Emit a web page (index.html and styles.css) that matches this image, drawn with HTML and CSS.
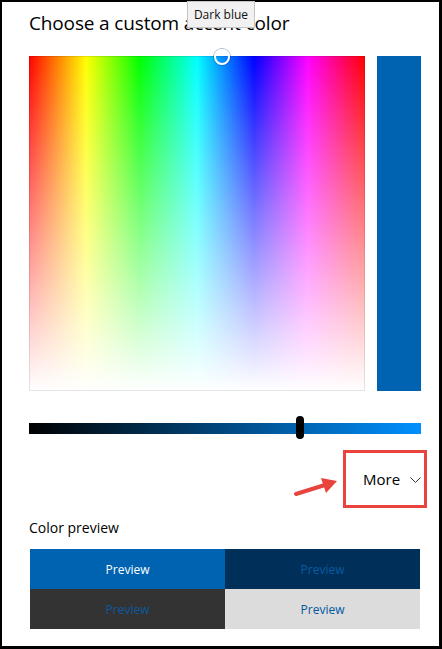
FILE: index.html
```html
<!DOCTYPE html>
<html lang="en">
<head>
    <meta charset="UTF-8">
    <meta name="viewport" content="width=device-width, initial-scale=1.0">
    <title>Choose a custom accent color</title>
    <link rel="stylesheet" href="styles.css">
</head>
<body>
    <div class="window">
        <div class="tooltip">Dark blue</div>
        <h1 class="title">Choose a custom accent color</h1>

        <div class="picker">
            <div class="spectrum">
                <div class="marker"></div>
            </div>
            <div class="swatch"></div>
        </div>

        <div class="slider">
            <div class="thumb"></div>
        </div>

        <div class="more-row">
            <svg class="callout" width="48" height="22" viewBox="0 0 48 22">
                <line x1="3" y1="18" x2="32" y2="9" stroke="#e8433d" stroke-width="4" stroke-linecap="round"/>
                <polygon points="44,5 28,2 33,17" fill="#e8433d"/>
            </svg>
            <div class="more-box">
                <span class="more-label">More</span>
                <svg class="chevron" width="11" height="6" viewBox="0 0 11 6">
                    <polyline points="0.5,0.5 5.5,5.5 10.5,0.5" fill="none" stroke="#333" stroke-width="1"/>
                </svg>
            </div>
        </div>

        <div class="preview-label">Color preview</div>
        <div class="preview-grid">
            <div class="preview accent">Preview</div>
            <div class="preview navy">Preview</div>
            <div class="preview dark">Preview</div>
            <div class="preview light">Preview</div>
        </div>
    </div>
</body>
</html>
```

FILE: styles.css
```css
body {
    margin: 0;
    font-family: "Open Sans", "Noto Sans", sans-serif;
    color: #000;
}
.window {
    position: relative;
    box-sizing: border-box;
    width: 442px;
    height: 649px;
    border-style: solid;
    border-color: #000;
    border-width: 2px 3px 3px 2px;
    background: #fff;
    padding: 7px 0 0 27px;
}
.tooltip {
    position: absolute;
    top: -1px;
    left: 185px;
    width: 68px;
    height: 27px;
    box-sizing: border-box;
    background: #f1f1f1;
    border: 1px solid #c4c4c4;
    font-size: 12px;
    line-height: 25px;
    text-align: center;
    color: #111;
    z-index: 5;
}
.title {
    margin: 0;
    font-size: 19px;
    font-weight: 400;
    line-height: 28px;
    letter-spacing: -0.15px;
}
.picker {
    display: flex;
    margin-top: 19px;
    height: 335px;
}
.spectrum {
    position: relative;
    width: 336px;
    height: 335px;
    box-sizing: border-box;
    border: 1px solid rgba(0, 0, 0, 0.1);
    background-origin: border-box;
    background-image:
        linear-gradient(to bottom, rgba(255, 255, 255, 0), #fff),
        linear-gradient(to right, #ff0000, #ffff00 17%, #00ff00 33%, #00ffff 50%, #0000ff 67%, #ff00ff 83%, #ff0000);
}
.marker {
    position: absolute;
    top: -8px;
    left: 184px;
    width: 12px;
    height: 12px;
    border: 2px solid #fff;
    border-radius: 50%;
    box-shadow: 0 0 0 1px rgba(0, 60, 120, 0.35);
}
.swatch {
    width: 44px;
    margin-left: 12px;
    background: #0063b1;
}
.slider {
    position: relative;
    width: 392px;
    height: 11px;
    margin-top: 32px;
    background: linear-gradient(to right, #000, #0090ff);
}
.thumb {
    position: absolute;
    top: -7px;
    left: 267px;
    width: 8px;
    height: 23px;
    border-radius: 4px;
    background: #000;
}
.more-row {
    display: flex;
    justify-content: flex-end;
    align-items: center;
    margin-top: 16px;
    padding-right: 12px;
}
.callout {
    margin-right: 2px;
    margin-top: 16px;
}
.more-box {
    display: flex;
    align-items: center;
    box-sizing: border-box;
    width: 84px;
    height: 58px;
    border: 3px solid #e8433d;
    padding-left: 17px;
}
.more-label {
    font-size: 15px;
    margin-right: 10px;
}
.chevron {
    margin-top: 1px;
}
.preview-label {
    margin-top: 10px;
    font-size: 14px;
    line-height: 20px;
}
.preview-grid {
    display: grid;
    grid-template-columns: 195px 195px;
    grid-auto-rows: 40px;
    margin-top: 11px;
    margin-left: 1px;
}
.preview {
    display: flex;
    align-items: center;
    justify-content: center;
    font-size: 12px;
}
.accent {
    background: #0063b1;
    color: #fff;
}
.navy {
    background: #00305a;
    color: #0a5aa0;
}
.dark {
    background: #333;
    color: #0a5aa0;
}
.light {
    background: #dcdcdc;
    color: #0058a0;
}
```
